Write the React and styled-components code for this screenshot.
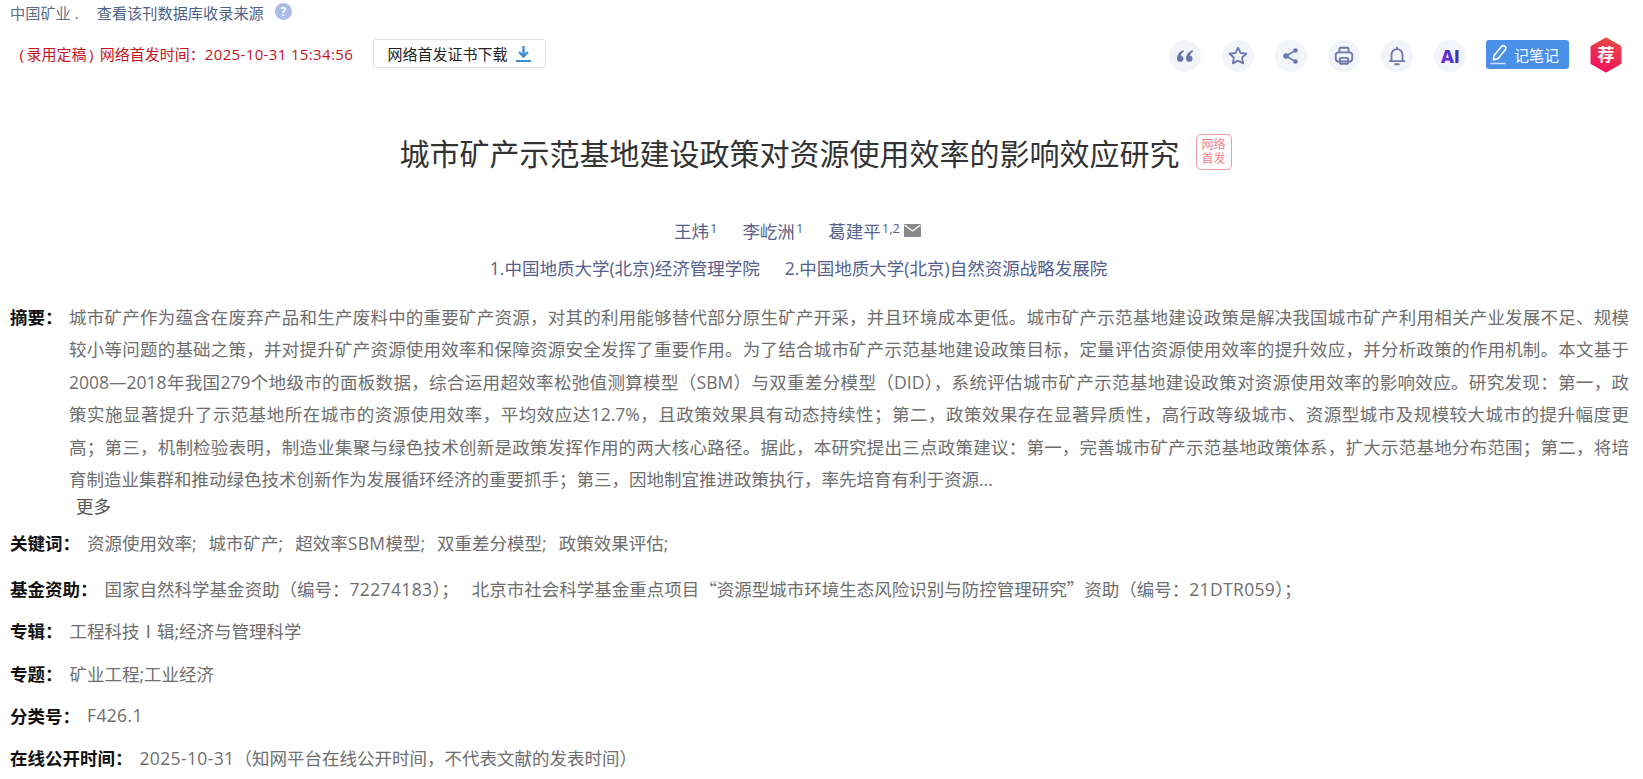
import React from "react";
import styled, { createGlobalStyle } from "styled-components";

const Global = createGlobalStyle`
  html, body { margin: 0; padding: 0; background: #fff; overflow: hidden; }
  body { font-family: "Open Sans", "Noto Sans CJK SC", sans-serif; }
`;
const Page = styled.div`width: 1643px; height: 779px; overflow: hidden; display: flex; flex-direction: column;`;
const SourceRow = styled.div`height: 24px; padding: 0 0 0 10px; display: flex; align-items: center; font-size: 15.2px; color: #5b6f8a;`;
const SourceLink = styled.span`margin-left: 18px; color: #4e6185;`;
const Help = styled.span`
  width: 17px; height: 17px; margin-left: 11px; border-radius: 50%; background: #a9bde6; color: #fff;
  font-size: 12px; font-weight: 700; display: inline-flex; align-items: center; justify-content: center;
`;
const ToolRow = styled.div`height: 32px; margin-top: 14px; padding: 0 20px 0 17px; display: flex; align-items: center;`;
const Stamp = styled.span`font-size: 15px; color: #c5121c; width: 356px; white-space: nowrap;`;
const Paren = styled.span`margin: 0 2.5px;`;
const Num = styled.span`letter-spacing: 0.36px;`;
const CertButton = styled.button`
  width: 173px; height: 29px; border: 1px solid #dfe1e6; border-radius: 3px; background: #fff; padding: 0;
  display: inline-flex; align-items: center; justify-content: center; gap: 7px;
  font: 15px "Open Sans", "Noto Sans CJK SC", sans-serif; color: #222;
`;
const Tools = styled.div`margin: 5px 0 0 auto; display: flex; align-items: center;`;
const Round = styled.span`
  width: 32px; height: 32px; margin-right: 21px; border-radius: 50%; background: #f3f4fa;
  display: inline-flex; align-items: center; justify-content: center; color: #6b78ab;
`;
const NoteBtn = styled.span`
  width: 83px; height: 29px; box-sizing: border-box; padding-left: 3px; margin: -4px 0 0 -1px; border-radius: 3px;
  background: #4a8fe8; color: #fff; font-size: 15px;
  display: inline-flex; align-items: center; gap: 5px;
`;
const Hex = styled.span`margin: -2px 0 0 20px; display: inline-flex; width: 34px; height: 36px;`;
const Title = styled.h1`
  margin: 57px 0 0; height: 50px; display: flex; align-items: center; justify-content: center; gap: 16px;
  font-size: 30px; font-weight: 400; color: #333; padding-right: 12px;
`;
const Badge = styled.span`
  width: 36px; height: 36px; box-sizing: border-box; border: 1px solid #ee9ca4; border-radius: 5px; color: #ee7f8a;
  font-size: 12px; line-height: 14px; text-align: center; display: flex; align-items: center; justify-content: center;
`;
const Authors = styled.div`
  margin-top: 40px; height: 28px; padding-right: 48px; display: flex; align-items: center; justify-content: center; gap: 25px;
  font-size: 17.5px; color: #55618c;
  sup { font-size: 13px; line-height: 0; vertical-align: 5px; margin-left: 1px; }
`;
const Author = styled.span`display: inline-flex; align-items: center; gap: 4px;`;
const Affils = styled.div`
  margin-top: 9px; height: 28px; padding-right: 46px; display: flex; align-items: center; justify-content: center; gap: 25px;
  font-size: 17.5px; color: #55618c;
`;
const Abstract = styled.div`margin-top: 19px; display: flex; padding: 0 14px 0 10px;`;
const Label = styled.span`font-size: 17.5px; font-weight: 700; color: #111; white-space: nowrap; margin-right: ${p => p.$gap || 7}px;`;
const AbstractLabel = styled(Label)`line-height: 32.5px;`;
const AbstractBody = styled.div`font-size: 17.5px; line-height: 32.5px; color: #6e6e6e; flex: 1;`;
const AbstractLine = styled.div`white-space: nowrap; text-align-last: justify;`;
const LastLine = styled.div`white-space: nowrap;`;
const More = styled.div`font-size: 17.5px; line-height: 24px; color: #555; margin: -2px 0 0 76px;`;
const Row = styled.div`height: 42.4px; padding-left: 10px; display: flex; align-items: center; font-size: 17.5px; color: #6e6e6e; white-space: nowrap;`;
const FirstRow = styled(Row)`margin-bottom: 3px;`;
const Rows = styled.div`margin-top: 4px;`;
const Wide = styled.span`font-family: "Noto Sans CJK SC", sans-serif;`;
const Keyword = styled.span`margin-right: 12px;`;
const Fund = styled.span`margin-right: 13px;`;

const Stroke = ({ children, size = 20 }) => (
  <svg width={size} height={size} viewBox="0 0 24 24" fill="none" stroke="currentColor" strokeWidth="2" strokeLinecap="round" strokeLinejoin="round">{children}</svg>
);

export default function App() {
  return (
    <Page>
      <Global />
      <SourceRow>中国矿业 .<SourceLink>查看该刊数据库收录来源</SourceLink><Help>?</Help></SourceRow>
      <ToolRow>
        <Stamp><Paren>(</Paren>录用定稿<Paren>)</Paren> 网络首发时间：<Num>2025-10-31 15:34:56</Num></Stamp>
        <CertButton>网络首发证书下载
          <svg width="17" height="18" viewBox="0 0 17 18"><path d="M8.5 1v9M4 7l4.500 4.500L13 7" fill="none" stroke="#3f8fd6" strokeWidth="2.400"/><path d="M1 16h15" stroke="#3f8fd6" strokeWidth="2"/></svg>
        </CertButton>
        <Tools>
          <Round><svg width="20" height="15" viewBox="0 0 18 14" fill="currentColor"><path d="M7.500 1C4 2.500 1.500 5 1.500 9a3 3 0 1 0 3.500-3c.3-1.300 1.300-2.400 2.800-3.200zM16 1c-3.500 1.500-6 4-6 8a3 3 0 1 0 3.500-3c.3-1.300 1.300-2.400 2.800-3.200z"/></svg></Round>
          <Round><Stroke size={22}><path d="M12 3l2.700 5.700 6.300.8-4.600 4.300 1.200 6.200L12 17l-5.600 3 1.200-6.200L3 9.500l6.300-.8z"/></Stroke></Round>
          <Round><svg width="18" height="18" viewBox="0 0 18 18" fill="currentColor"><circle cx="4" cy="9" r="2.800"/><circle cx="13.500" cy="3.500" r="2.300"/><circle cx="13.500" cy="14.500" r="2.300"/><path d="M4 9l9.500-5.500M4 9l9.500 5.500" stroke="currentColor" strokeWidth="1.500"/></svg></Round>
          <Round><Stroke size={22}><path d="M7 8V4.500A1.500 1.500 0 0 1 8.500 3h7A1.500 1.500 0 0 1 17 4.500V8"/><rect x="3" y="8" width="18" height="10" rx="3"/><rect x="7.500" y="14" width="9" height="6.500" rx="1"/></Stroke></Round>
          <Round><Stroke size={22}><path d="M6 17V10.500a6 6 0 0 1 12 0V17M4 17.500h16M10 21h4M12 2.500v2"/></Stroke></Round>
          <Round>
            <svg width="24" height="18" viewBox="0 0 24 18"><defs><linearGradient id="aig" x1="0" y1="1" x2="1" y2="0"><stop offset="0" stopColor="#7b2ff0"/><stop offset="1" stopColor="#2a2f9a"/></linearGradient></defs><text x="12" y="15.500" textAnchor="middle" fontFamily="Inter" fontWeight="800" fontSize="18" fill="url(#aig)">AI</text></svg>
          </Round>
          <NoteBtn>
            <svg width="20" height="22" viewBox="0 0 20 22" fill="none" stroke="#fff" strokeWidth="1.600" strokeLinecap="round" strokeLinejoin="round"><path d="M5 12.500L12.500 3.500a2.500 2.500 0 0 1 3.800 3.200L9 15.500l-4.500 1.500z"/><path d="M2 20.500h14" stroke="#cfe0fa"/></svg>
            记笔记
          </NoteBtn>
          <Hex>
            <svg width="34" height="36" viewBox="0 0 34 36"><defs><linearGradient id="hexg" x1="0.700" y1="0" x2="0.300" y2="1"><stop offset="0" stopColor="#e84a45"/><stop offset="1" stopColor="#f0105f"/></linearGradient></defs><path d="M17 2l14 8v16l-14 8-14-8V10z" fill="url(#hexg)" stroke="url(#hexg)" strokeWidth="3" strokeLinejoin="round"/><text x="17" y="24" textAnchor="middle" fontFamily="Noto Sans CJK SC" fontWeight="700" fontSize="17" fill="#fff">荐</text></svg>
          </Hex>
        </Tools>
      </ToolRow>
      <Title>城市矿产示范基地建设政策对资源使用效率的影响效应研究<Badge>网络<br />首发</Badge></Title>
      <Authors>
        <Author><span>王炜<sup>1</sup></span></Author>
        <Author><span>李屹洲<sup>1</sup></span></Author>
        <Author><span>葛建平<sup>1,2</sup></span>
          <svg width="17" height="13" viewBox="0 0 17 13"><path d="M0 0h17v13H0z" fill="#8a8a8a"/><path d="M.5 1l8 6 8-6" fill="none" stroke="#fff" strokeWidth="1.200"/></svg>
        </Author>
      </Authors>
      <Affils><span>1.中国地质大学(北京)经济管理学院</span><span>2.中国地质大学(北京)自然资源战略发展院</span></Affils>
      <Abstract>
        <AbstractLabel $gap={6.5}>摘要：</AbstractLabel>
        <AbstractBody>
          <AbstractLine>城市矿产作为蕴含在废弃产品和生产废料中的重要矿产资源，对其的利用能够替代部分原生矿产开采，并且环境成本更低。城市矿产示范基地建设政策是解决我国城市矿产利用相关产业发展不足、规模</AbstractLine>
          <AbstractLine>较小等问题的基础之策，并对提升矿产资源使用效率和保障资源安全发挥了重要作用。为了结合城市矿产示范基地建设政策目标，定量评估资源使用效率的提升效应，并分析政策的作用机制。本文基于</AbstractLine>
          <AbstractLine>2008—2018年我国279个地级市的面板数据，综合运用超效率松弛值测算模型（SBM）与双重差分模型（DID），系统评估城市矿产示范基地建设政策对资源使用效率的影响效应。研究发现：第一，政</AbstractLine>
          <AbstractLine>策实施显著提升了示范基地所在城市的资源使用效率，平均效应达12.7%，且政策效果具有动态持续性；第二，政策效果存在显著异质性，高行政等级城市、资源型城市及规模较大城市的提升幅度更</AbstractLine>
          <AbstractLine>高；第三，机制检验表明，制造业集聚与绿色技术创新是政策发挥作用的两大核心路径。据此，本研究提出三点政策建议：第一，完善城市矿产示范基地政策体系，扩大示范基地分布范围；第二，将培</AbstractLine>
          <LastLine>育制造业集群和推动绿色技术创新作为发展循环经济的重要抓手；第三，因地制宜推进政策执行，率先培育有利于资源...</LastLine>
        </AbstractBody>
      </Abstract>
      <More>更多</More>
      <Rows>
        <FirstRow><Label>关键词：</Label>
          <Keyword>资源使用效率;</Keyword><Keyword>城市矿产;</Keyword><Keyword>超效率<Num>SBM</Num>模型;</Keyword><Keyword>双重差分模型;</Keyword><Keyword>政策效果评估;</Keyword>
        </FirstRow>
        <Row><Label>基金资助：</Label><Fund>国家自然科学基金资助（编号：<Num>72274183</Num>）；</Fund><span>北京市社会科学基金重点项目<Wide>“</Wide>资源型城市环境生态风险识别与防控管理研究<Wide>”</Wide>资助（编号：<Num>21DTR059</Num>）；</span></Row>
        <Row><Label>专辑：</Label>工程科技Ⅰ辑;经济与管理科学</Row>
        <Row><Label>专题：</Label>矿业工程;工业经济</Row>
        <Row><Label>分类号：</Label><Num>F426.1</Num></Row>
        <Row><Label>在线公开时间：</Label><Num>2025-10-31</Num>（知网平台在线公开时间，不代表文献的发表时间）</Row>
      </Rows>
    </Page>
  );
}
